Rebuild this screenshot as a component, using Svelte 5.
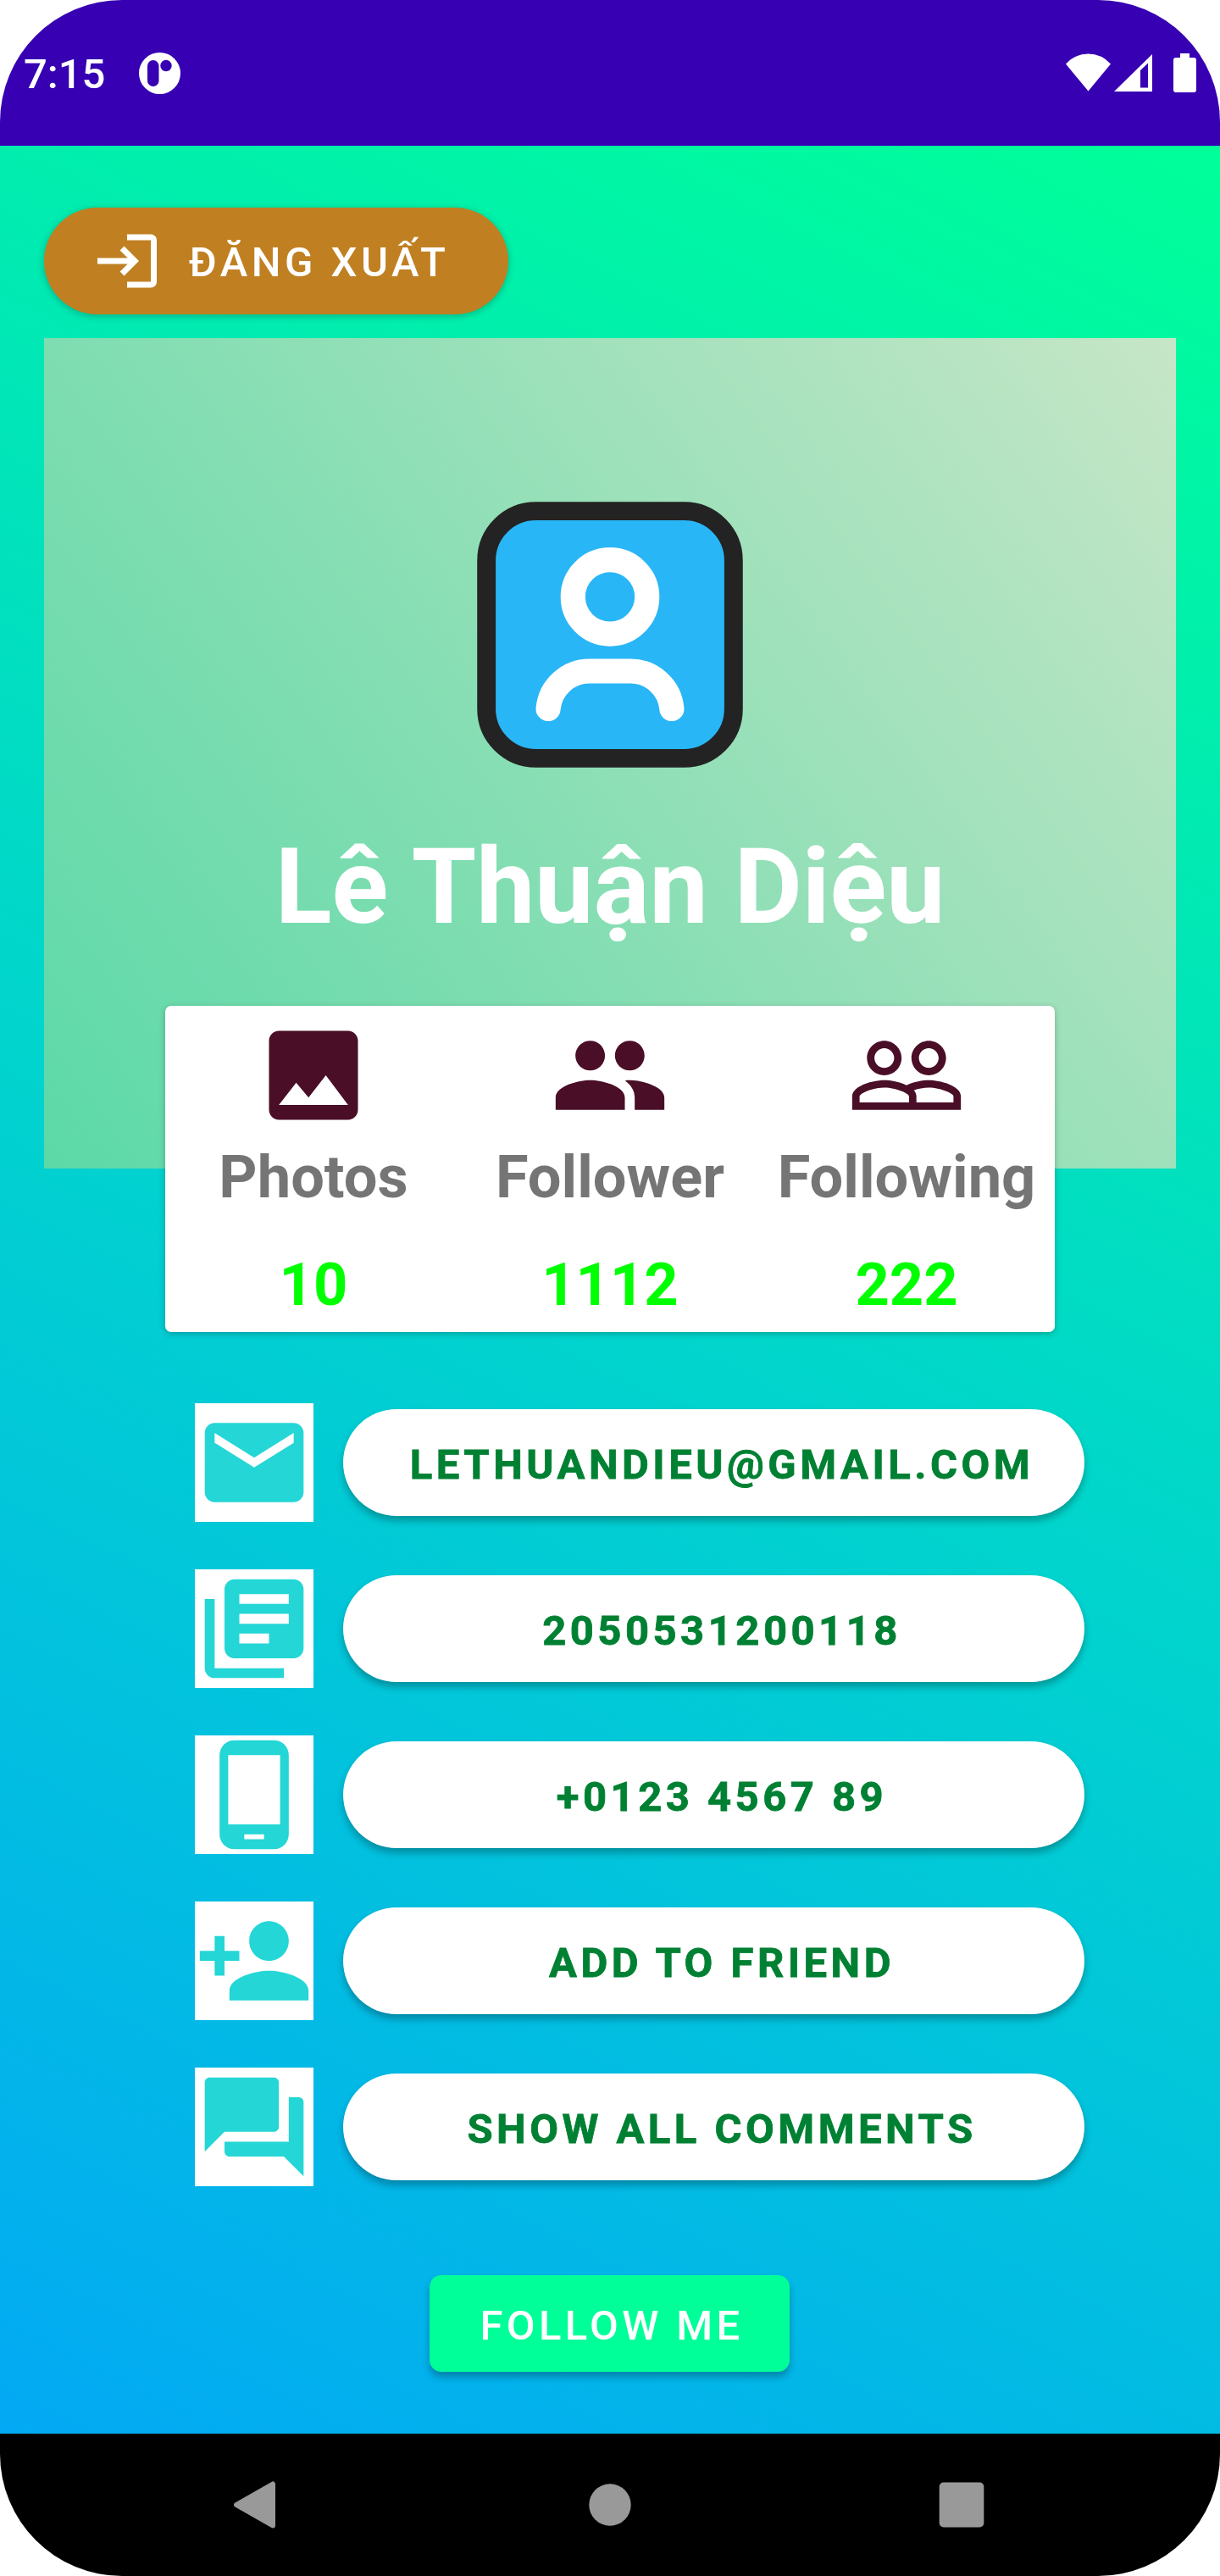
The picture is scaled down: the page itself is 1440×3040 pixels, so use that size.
<script>
  const stats = [
    { label: 'Photos', value: '10', path: 'M21 19V5c0-1.1-.9-2-2-2H5c-1.1 0-2 .9-2 2v14c0 1.1.9 2 2 2h14c1.1 0 2-.9 2-2zM8.5 13.5l2.5 3.01L14.5 12l4.5 6H5l3.5-4.5z' },
    { label: 'Follower', value: '1112', path: 'M16 11c1.66 0 2.99-1.34 2.99-3S17.66 5 16 5s-3 1.34-3 3 1.34 3 3 3zm-8 0c1.66 0 2.99-1.34 2.99-3S9.66 5 8 5 5 6.34 5 8s1.34 3 3 3zm0 2c-2.33 0-7 1.17-7 3.5V19h14v-2.5c0-2.33-4.67-3.5-7-3.5zm8 0c-.29 0-.62.02-.97.05 1.16.84 1.97 1.97 1.97 3.45V19h6v-2.5c0-2.33-4.67-3.5-7-3.5z' },
    { label: 'Following', value: '222', path: 'M16.5 13c-1.2 0-3.07.34-4.5 1-1.43-.67-3.3-1-4.5-1C5.33 13 1 14.08 1 16.25V19h22v-2.75c0-2.17-4.33-3.25-6.5-3.25zm-4 4.5h-10v-1.25c0-.54 2.56-1.75 5-1.75s5 1.21 5 1.75v1.25zm9 0H14v-1.25c0-.46-.2-.86-.52-1.22.88-.3 1.96-.53 3.02-.53 2.44 0 5 1.21 5 1.75v1.25zM7.5 12c1.93 0 3.5-1.57 3.5-3.5S9.43 5 7.5 5 4 6.57 4 8.5 5.57 12 7.5 12zm0-5.5c1.1 0 2 .9 2 2s-.9 2-2 2-2-.9-2-2 .9-2 2-2zm9 5.5c1.93 0 3.5-1.57 3.5-3.5S18.43 5 16.5 5 13 6.57 13 8.5s1.57 3.5 3.5 3.5zm0-5.5c1.1 0 2 .9 2 2s-.9 2-2 2-2-.9-2-2 .9-2 2-2z' },
  ];

  const rows = [
    { text: 'LETHUANDIEU@GMAIL.COM', path: 'M20 4H4c-1.1 0-1.99.9-1.99 2L2 18c0 1.1.9 2 2 2h16c1.1 0 2-.9 2-2V6c0-1.1-.9-2-2-2zm0 4l-8 5-8-5V6l8 5 8-5v2z' },
    { text: '2050531200118', path: 'M4 6H2v14c0 1.1.9 2 2 2h14v-2H4V6zm16-4H8c-1.1 0-2 .9-2 2v12c0 1.1.9 2 2 2h12c1.1 0 2-.9 2-2V4c0-1.1-.9-2-2-2zm-1 9H9V9h10v2zm-4 4H9v-2h6v2zm4-8H9V5h10v2z' },
    { text: '+0123 4567 89', path: 'M16 1H8C6.34 1 5 2.34 5 4v16c0 1.66 1.34 3 3 3h8c1.66 0 3-1.34 3-3V4c0-1.66-1.34-3-3-3zm-2 20h-4v-1h4v1zm3.25-3H6.75V4h10.5v14z' },
    { text: 'ADD TO FRIEND', path: 'M15 12c2.21 0 4-1.79 4-4s-1.79-4-4-4-4 1.79-4 4 1.79 4 4 4zm-9-2V7H4v3H1v2h3v3h2v-3h3v-2H6zm9 4c-2.67 0-8 1.34-8 4v2h16v-2c0-2.66-5.33-4-8-4z' },
    { text: 'SHOW ALL COMMENTS', path: 'M21 6h-2v9H6v2c0 .55.45 1 1 1h11l4 4V7c0-.55-.45-1-1-1zm-4 6V3c0-.55-.45-1-1-1H3c-.55 0-1 .45-1 1v14l4-4h10c.55 0 1-.45 1-1z' },
  ];
</script>

<div class="phone">
  <header class="status">
    <span class="time">7:15</span>
    <svg class="notice" viewBox="0 0 49 49">
      <circle cx="24.5" cy="24.5" r="24.5" fill="#fff" />
      <rect x="10" y="9" width="13.5" height="31" rx="6.75" fill="#3700b3" />
      <circle cx="32" cy="15.5" r="6.7" fill="#3700b3" />
    </svg>
    <svg class="system" viewBox="0 0 154 46" fill="#fff">
      <path d="M0 12.500Q11 0.500 26.500 0.500T53 12.500L26.500 44.500z" />
      <path fill-rule="evenodd" d="M57 45L102 1V45zM88 20V40.500H97V11.500z" />
      <path d="M135 0h11v5h5a3 3 0 0 1 3 3v35a3 3 0 0 1-3 3h-21a3 3 0 0 1-3-3V8a3 3 0 0 1 3-3h5z" />
    </svg>
  </header>

  <main class="screen">
    <button class="logout">
      <svg viewBox="0 0 24 24" fill="#fff">
        <path d="M11 7L9.600 8.400l2.600 2.600H2v2h10.200l-2.600 2.600L11 17l5-5-5-5zm9 12h-8v2h8c1.100 0 2-.9 2-2V5c0-1.100-.9-2-2-2h-8v2h8v14z" />
      </svg>
      <span>ĐĂNG XUẤT</span>
    </button>

    <section class="hero">
      <svg class="avatar" viewBox="0 0 24 24" fill="none">
        <rect x="2" y="2" width="20" height="20" rx="4" fill="#29b6f6" stroke="#232323" stroke-width="1.5" />
        <circle cx="12" cy="8.940" r="3" stroke="#fff" stroke-width="2" />
        <path d="M7 18A3.350 3.350 0 0 1 10.350 14.950H13.650A3.350 3.350 0 0 1 17 18" stroke="#fff" stroke-width="2" stroke-linecap="round" />
      </svg>
      <h1>Lê Thuận Diệu</h1>
    </section>

    <section class="card">
      {#each stats as s}
        <div class="stat">
          <svg viewBox="0 0 24 24" fill="#4a0e27"><path d={s.path} /></svg>
          <span class="label">{s.label}</span>
          <span class="value">{s.value}</span>
        </div>
      {/each}
    </section>

    <section class="list">
      {#each rows as r}
        <div class="row">
          <svg viewBox="0 0 24 24" fill="#24d6d6"><path d={r.path} /></svg>
          <button class="pill">{r.text}</button>
        </div>
      {/each}
    </section>

    <button class="follow">FOLLOW ME</button>
  </main>

  <nav class="nav">
    <svg viewBox="0 0 60 60"><path d="M47 5.500V54.500L4 30z" fill="#999" stroke="#999" stroke-width="6" stroke-linejoin="round" /></svg>
    <svg viewBox="0 0 60 60"><circle cx="30" cy="30" r="24.700" fill="#999" /></svg>
    <svg viewBox="0 0 60 60"><rect x="3.700" y="3.500" width="52.600" height="53" rx="5" fill="#999" /></svg>
  </nav>
</div>

<style>
  :global(body) {
    background: #fff;
  }
  .phone {
    width: 1440px;
    height: 3040px;
    display: flex;
    flex-direction: column;
    border-radius: 144px;
    overflow: hidden;
    font-family: Roboto, sans-serif;
  }
  svg {
    display: block;
    flex: none;
  }
  button {
    border: 0;
    padding: 0;
    font: 500 49px/58px Roboto, sans-serif;
    letter-spacing: 4.37px;
    white-space: nowrap;
  }
  .status {
    height: 172px;
    flex: none;
    box-sizing: border-box;
    display: flex;
    align-items: center;
    padding: 0 28px;
    background: #3700b3;
    color: #fff;
  }
  .time {
    width: 136px;
    font-size: 49px;
    font-weight: 500;
    line-height: 58px;
    padding-top: 4px;
  }
  .notice {
    width: 49px;
    height: 49px;
  }
  .system {
    width: 154px;
    height: 46px;
    margin-left: auto;
  }
  .screen {
    height: 2700px;
    flex: none;
    box-sizing: border-box;
    padding-top: 73px;
    display: flex;
    flex-direction: column;
    align-items: center;
    background: linear-gradient(26.5deg, #03a9f4, #01d5cc 50%, #00ff99);
  }
  .logout {
    align-self: flex-start;
    margin-left: 52px;
    width: 548px;
    height: 126px;
    box-sizing: border-box;
    padding-left: 56px;
    display: flex;
    align-items: center;
    gap: 31px;
    border-radius: 63px;
    background: #c08022;
    color: #fff;
    box-shadow: 0 2px 8px rgba(0, 0, 0, 0.25);
  }
  .logout svg {
    width: 84px;
    height: 84px;
  }
  .logout span {
    padding-top: 3px;
    letter-spacing: 4.5px;
  }
  .hero {
    width: 1336px;
    height: 980px;
    flex: none;
    box-sizing: border-box;
    margin-top: 28px;
    padding-top: 175px;
    display: flex;
    flex-direction: column;
    align-items: center;
    background: linear-gradient(53.74deg, #5cd9a8, #7eddb1 35%, #c6e6c7);
  }
  .avatar {
    width: 350px;
    height: 350px;
  }
  h1 {
    margin: 51px 0 0;
    font-size: 123.5px;
    line-height: 144px;
    font-weight: 700;
    color: #fff;
    white-space: nowrap;
  }
  .card {
    width: 1050px;
    height: 385px;
    flex: none;
    box-sizing: border-box;
    margin-top: -192px;
    padding-top: 12px;
    display: grid;
    grid-template-columns: repeat(3, 350px);
    border-radius: 7px;
    background: #fff;
    box-shadow: 0 2px 7px rgba(0, 0, 0, 0.25);
  }
  .stat {
    display: flex;
    flex-direction: column;
    align-items: center;
    font-size: 70.4px;
    line-height: 82px;
    font-weight: 700;
  }
  .stat svg {
    width: 140px;
    height: 140px;
  }
  .label {
    margin-top: 9px;
    color: #757575;
  }
  .value {
    margin-top: 45px;
    color: #00ff00;
  }
  .list {
    width: 1050px;
    margin: 84px 0 0 70px;
    display: flex;
    flex-direction: column;
    gap: 56px;
  }
  .row {
    display: flex;
    align-items: center;
    gap: 35px;
  }
  .row svg {
    width: 140px;
    height: 140px;
    background: #fff;
  }
  .pill {
    width: 875px;
    height: 126px;
    box-sizing: border-box;
    padding: 5px 0 0 19px;
    border-radius: 63px;
    background: #fff;
    color: #008033;
    font-weight: 700;
    letter-spacing: 4.48px;
    -webkit-text-stroke: 0.8px #008033;
    box-shadow: 0 6px 9px rgba(0, 0, 0, 0.27);
  }
  .follow {
    width: 425px;
    height: 114px;
    flex: none;
    margin: 105px 1px 0 0;
    padding: 5px 0 0 5px;
    border-radius: 14px;
    background: #00ff99;
    color: #fff;
    box-shadow: 0 6px 9px rgba(0, 0, 0, 0.27);
  }
  .nav {
    height: 168px;
    flex: none;
    box-sizing: border-box;
    display: flex;
    align-items: center;
    justify-content: space-between;
    padding: 0 275px;
    background: #000;
  }
  .nav svg {
    width: 60px;
    height: 60px;
  }
</style>
